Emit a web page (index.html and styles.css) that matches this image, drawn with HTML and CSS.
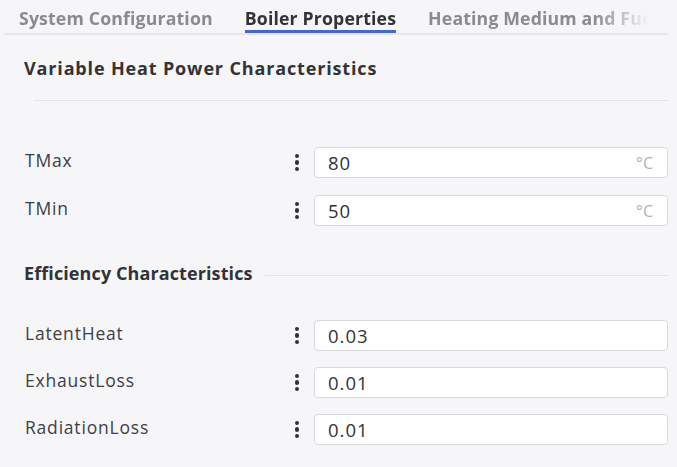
FILE: index.html
```html
<!DOCTYPE html>
<html>
<head>
<meta charset="utf-8">
<link rel="stylesheet" href="styles.css">
</head>
<body>
<div class="page">
  <div class="tabbar">
    <div class="tabs">
      <div class="tab">System Configuration</div>
      <div class="tab active">Boiler Properties</div>
      <div class="tab">Heating Medium and Fuel</div>
    </div>
  </div>

  <section class="group first">
    <h2 class="heading wide">Variable Heat Power Characteristics</h2>
    <div class="divider"></div>
    <div class="rows">
      <div class="row">
        <div class="label">TMax</div>
        <div class="kebab"><span></span><span></span><span></span></div>
        <div class="field"><span class="value">80</span><span class="unit">°C</span></div>
      </div>
      <div class="row">
        <div class="label">TMin</div>
        <div class="kebab"><span></span><span></span><span></span></div>
        <div class="field"><span class="value">50</span><span class="unit">°C</span></div>
      </div>
    </div>
  </section>

  <section class="group second">
    <div class="heading-line">
      <h2 class="heading">Efficiency Characteristics</h2>
      <div class="rule"></div>
    </div>
    <div class="rows">
      <div class="row">
        <div class="label">LatentHeat</div>
        <div class="kebab"><span></span><span></span><span></span></div>
        <div class="field"><span class="value">0.03</span></div>
      </div>
      <div class="row">
        <div class="label">ExhaustLoss</div>
        <div class="kebab"><span></span><span></span><span></span></div>
        <div class="field"><span class="value">0.01</span></div>
      </div>
      <div class="row">
        <div class="label">RadiationLoss</div>
        <div class="kebab"><span></span><span></span><span></span></div>
        <div class="field"><span class="value">0.01</span></div>
      </div>
    </div>
  </section>
</div>
</body>
</html>
```

FILE: styles.css
```css
html, body {
  margin: 0;
  padding: 0;
  background: #f6f6f8;
}
body {
  font-family: "Open Sans", "Noto Sans", sans-serif;
  color: #333;
  width: 677px;
  height: 467px;
  overflow: hidden;
}
.page {
  padding: 0 9px 0 0;
}
.tabbar {
  margin-left: 4px;
  height: 33px;
  border-bottom: 2px solid #e7e7ea;
  overflow: hidden;
}
.tabs {
  display: flex;
  gap: 32px;
  padding-left: 15px;
  width: 660px;
  overflow: hidden;
  white-space: nowrap;
  -webkit-mask-image: linear-gradient(to right, #000 0, #000 590px, transparent 645px);
  mask-image: linear-gradient(to right, #000 0, #000 590px, transparent 645px);
}
.tab {
  font-size: 17.7px;
  font-weight: 700;
  color: #8b8b8e;
  line-height: 22px;
  padding-top: 7px;
  height: 23px;
  border-bottom: 3px solid transparent;
  letter-spacing: 0.15px;
  flex-shrink: 0;
}
.tab.active {
  color: #333336;
  border-bottom-color: #4467d4;
}
.heading {
  margin: 0;
  font-size: 18px;
  font-weight: 700;
  line-height: 24px;
  color: #333336;
  padding-left: 24px;
  letter-spacing: 0.1px;
}
.heading.wide {
  letter-spacing: 0.85px;
}
.group.first {
  padding-top: 21px;
}
.divider {
  margin: 20px 0 0 34px;
  height: 1px;
  background: #e4e4e7;
}
.rows {
  display: flex;
  flex-direction: column;
  gap: 17px;
}
.group.first .rows {
  margin-top: 46px;
}
.row {
  display: flex;
  align-items: center;
}
.label {
  flex: 1;
  padding-left: 25px;
  font-size: 17.5px;
  letter-spacing: 0.8px;
  color: #404044;
  padding-bottom: 5px;
}
.kebab {
  width: 8px;
  display: flex;
  flex-direction: column;
  align-items: center;
  gap: 2px;
  margin-right: 13px;
}
.kebab span {
  width: 4.5px;
  height: 4.5px;
  border-radius: 50%;
  background: #333;
}
.field {
  background: #fff;
  border: 1px solid #d9d9dc;
  border-radius: 4px;
  display: flex;
  align-items: center;
  justify-content: space-between;
  padding: 0 14px 0 13px;
  box-sizing: border-box;
  height: 31px;
  width: 354px;
}
.value {
  font-size: 18.5px;
  letter-spacing: 1px;
  color: #333;
}
.unit {
  font-size: 16px;
  color: #b3b3b7;
}
.group.second {
  margin-top: 35px;
}
.heading-line {
  display: flex;
  align-items: center;
}
.rule {
  flex: 1;
  height: 1px;
  background: #e4e4e7;
  margin-left: 12px;
  margin-top: 4px;
}
.group.second .rows {
  margin-top: 35px;
  gap: 16px;
}
```
